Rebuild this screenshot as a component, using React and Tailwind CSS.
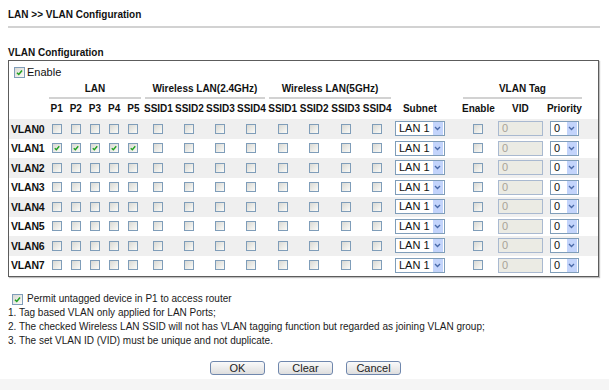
import React from "react";

const COLS =
  "grid grid-cols-[38px_repeat(5,19.2px)_repeat(4,31px)_repeat(4,31.5px)_68px_35px_49px_39px]";

function Check({ checked = false, size = "w-[10px] h-[10px]" }) {
  return (
    <div
      className={`${size} relative shrink-0 border border-[#7f9db9] bg-linear-to-br from-[#d9d9d4] to-[#fbfbf8]`}
    >
      {checked && (
        <svg viewBox="0 0 10 10" className="absolute inset-0 w-full h-full">
          <path
            d="M2.2 5.2 L4.2 7.2 L7.8 2.8"
            fill="none"
            stroke="#21a121"
            strokeWidth="1.7"
          />
        </svg>
      )}
    </div>
  );
}

function Arrow() {
  return (
    <div className="w-[10px] h-[13px] mr-[1px] bg-[#c3d4fb] flex items-center justify-center">
      <svg viewBox="0 0 8 6" className="w-[7px] h-[5px]">
        <path d="M1 1.2 L4 4.3 L7 1.2" fill="none" stroke="#4a6aa8" strokeWidth="1.6" />
      </svg>
    </div>
  );
}

function Select({ text, width }) {
  return (
    <div
      className={`${width} h-[15px] border border-[#7f9db9] bg-white flex items-center`}
    >
      <span className="flex-1 pl-[3px] text-[11px] leading-[13px] text-[#111]">{text}</span>
      <Arrow />
    </div>
  );
}

const hdr = "text-[10px] font-bold leading-[12px] text-[#111] whitespace-nowrap";

export default function App() {
  const ports = [0, 1, 2, 3, 4];
  const ssids = [0, 1, 2, 3, 4, 5, 6, 7];
  const rows = [0, 1, 2, 3, 4, 5, 6, 7];
  return (
    <div className="w-[609px] h-[390px] bg-white overflow-hidden font-['Liberation_Sans',Arial,sans-serif] text-[#111] flex flex-col">
      <div className="px-[8px] pt-[9px]">
        <div className="text-[10px] font-bold leading-[12px]">LAN &gt;&gt; VLAN Configuration</div>
        <div className="mt-[5px] h-[2px] bg-[#d2d2d2] w-[592px]" />
        <div className="mt-[19px] text-[10px] font-bold leading-[12px]">VLAN Configuration</div>
        <div className="mt-[1px] w-[591px] border border-[#5c5c5c] shadow-[1px_1px_1px_rgba(0,0,0,0.25)] pb-[1px]">
          <div className="h-[22px] flex items-center pl-[5px] gap-[2px]">
            <Check checked size="w-[11px] h-[11px]" />
            <span className="text-[11px] leading-[13px]">Enable</span>
          </div>
          <div className={`${COLS} h-[16px]`}>
            <div />
            {[
              ["LAN", "col-span-5"],
              ["Wireless LAN(2.4GHz)", "col-span-4"],
              ["Wireless LAN(5GHz)", "col-span-4"],
            ].map(([t, span]) => (
              <div key={t} className={`${span} flex flex-col items-stretch`}>
                <div className={`${hdr} text-center`}>{t}</div>
                <div className="mt-[2px] mx-[2px] h-[2px] bg-[#d2d2d2]" />
              </div>
            ))}
            <div />
            <div className="col-span-3 flex flex-col items-stretch">
              <div className={`${hdr} text-center`}>VLAN Tag</div>
              <div className="mt-[2px] mx-[2px] h-[2px] bg-[#d2d2d2]" />
            </div>
          </div>
          <div className={`${COLS} h-[20px] items-center`}>
            <div />
            {["P1", "P2", "P3", "P4", "P5"].map((p) => (
              <div key={p} className={`${hdr} flex justify-center`}>{p}</div>
            ))}
            {["SSID1", "SSID2", "SSID3", "SSID4", "SSID1", "SSID2", "SSID3", "SSID4"].map((s, i) => (
              <div key={i} className={`${hdr} flex justify-center`}>{s}</div>
            ))}
            <div className={`${hdr} pl-[10px]`}>Subnet</div>
            <div className={`${hdr} flex justify-center`}>Enable</div>
            <div className={`${hdr} flex justify-center`}>VID</div>
            <div className={`${hdr} flex justify-center`}>Priority</div>
          </div>
          {rows.map((r) => (
            <div
              key={r}
              className={`${COLS} h-[19.5px] items-center ${r % 2 === 0 ? "bg-[#efefef]" : "bg-white"}`}
            >
              <div className="pl-[2px] text-[10.5px] font-bold leading-[12px] tracking-[-0.2px]">VLAN{r}</div>
              {ports.map((p) => (
                <div key={p} className="flex justify-center">
                  <Check checked={r === 1} />
                </div>
              ))}
              {ssids.map((s) => (
                <div key={s} className="flex justify-center">
                  <Check />
                </div>
              ))}
              <div className="pl-[2px]">
                <Select text="LAN 1" width="w-[50px]" />
              </div>
              <div className="flex justify-center">
                <Check />
              </div>
              <div className="flex justify-center">
                <div className="w-[45px] h-[15px] border border-[#a9b9d0] bg-[#ebebe4] pl-[3px] text-[11px] leading-[13px] text-[#a8a398]">
                  0
                </div>
              </div>
              <div className="flex justify-center">
                <Select text="0" width="w-[29px]" />
              </div>
            </div>
          ))}
        </div>
      </div>
      <div className="px-[8px] mt-[15px] text-[10px] leading-[14px] text-[#1a1a1a]">
        <div className="flex items-center gap-[4px] pl-[4px]">
          <Check checked size="w-[11px] h-[11px]" />
          <span>Permit untagged device in P1 to access router</span>
        </div>
        <div>1. Tag based VLAN only applied for LAN Ports;</div>
        <div>2. The checked Wireless LAN SSID will not has VLAN tagging function but regarded as joining VLAN group;</div>
        <div>3. The set VLAN ID (VID) must be unique and not duplicate.</div>
      </div>
      <div className="mt-[13px] flex justify-center gap-[13px] pl-[2px]">
        {["OK", "Clear", "Cancel"].map((b) => (
          <div
            key={b}
            className="w-[55px] h-[14px] rounded-[3px] border border-[#6f87ad] bg-linear-to-b from-[#fafafa] to-[#dedede] flex items-center justify-center text-[11px] leading-[12px] text-[#222]"
          >
            {b}
          </div>
        ))}
      </div>
      <div className="mt-auto h-[11px] bg-[#f5f5f5]" />
    </div>
  );
}
